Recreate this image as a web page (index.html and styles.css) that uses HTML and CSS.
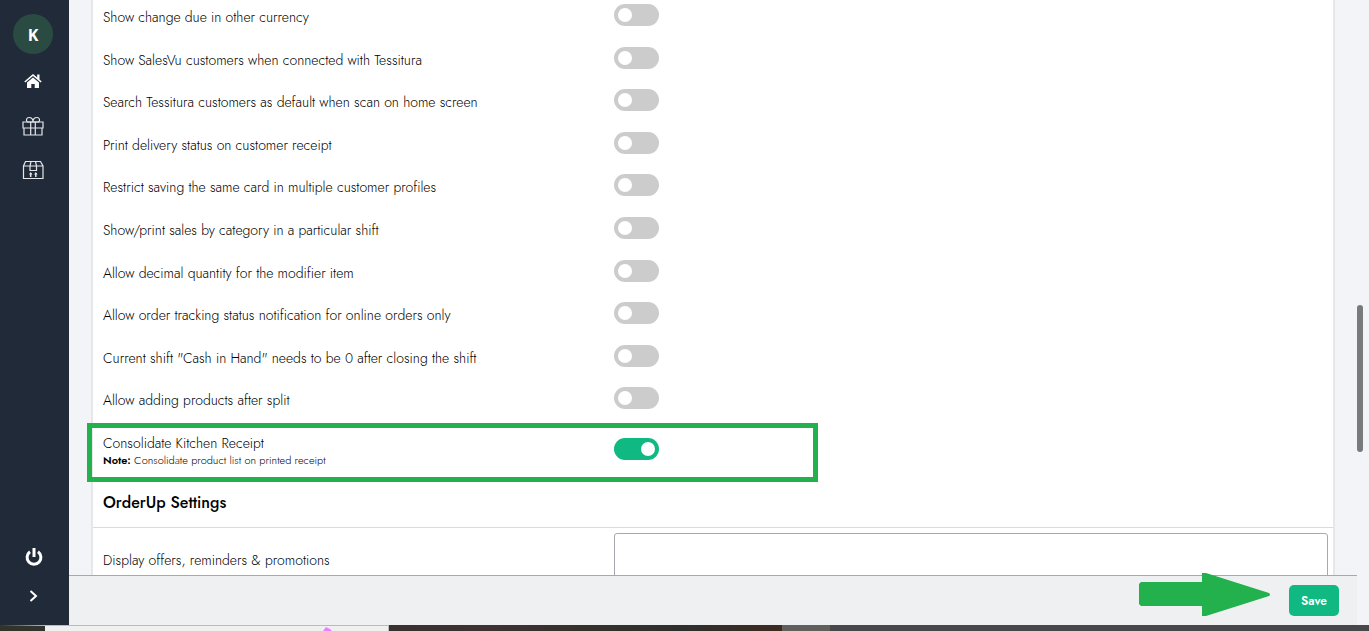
FILE: index.html
```html
<!DOCTYPE html>
<html lang="en">
<head>
    <meta charset="UTF-8">
    <meta name="viewport" content="width=device-width, initial-scale=1.0">
    <title>Settings</title>
    <link rel="stylesheet" href="styles.css">
</head>
<body>
    <div class="app">
        <nav class="sidebar">
            <a href="#" class="avatar">K</a>
            <a href="#" class="nav-link" aria-label="Home">
                <svg width="18" height="16" viewBox="0 0 18 16" fill="#fff">
                    <path d="M9 3.400 3 8.500V14h4.300v-4h3.400v4H15V8.500z"/>
                    <path d="M9 0 .3 7.400l1 1.200L9 2.100l7.700 6.500 1-1.200-2.200-1.900V.4h-2.300v3.100z"/>
                </svg>
            </a>
            <a href="#" class="nav-link" aria-label="Gifts">
                <svg width="22" height="20" viewBox="0 0 22 20" fill="none" stroke="#e4e6e9" stroke-width="1.200">
                    <path d="M1 6h20v6H1zM2 12h18v7H2zM8.700 6v13M13.300 6v13"/>
                    <path d="M11 6H5.500C3.500 4.500 4.500 1.500 7 1.500c2.500 0 4 2 4 4.500zM11 6h5.500c2-1.500 1-4.500-1.500-4.500-2.500 0-4 2-4 4.500z"/>
                </svg>
            </a>
            <a href="#" class="nav-link" aria-label="Products">
                <svg width="22" height="20" viewBox="0 0 22 20" fill="none" stroke="#e4e6e9" stroke-width="1.200">
                    <path d="M3.500 1.500h15L21 6v12.500H1.500V6zM1.500 6H21M9 1.500 8 6v4.500h6.500V6l-1-4.500"/>
                    <path d="M8.700 17v-4M13.800 17v-4" stroke-width="1.500"/>
                    <path d="M7 14.500 8.700 12l1.700 2.500zM12.100 14.500l1.700-2.500 1.700 2.500z" fill="#e4e6e9" stroke="none"/>
                </svg>
            </a>
            <a href="#" class="nav-link power" aria-label="Log out">
                <svg width="18" height="18" viewBox="0 0 18 18" fill="none" stroke="#fff" stroke-width="3">
                    <path d="M5 3.700a6.900 6.900 0 1 0 8 0M9 0v9"/>
                </svg>
            </a>
            <button class="expand" aria-label="Expand menu">
                <svg width="9" height="12" viewBox="0 0 9 12" fill="none" stroke="#fff" stroke-width="2">
                    <path d="M1.500 1 7 6l-5.500 5"/>
                </svg>
            </button>
        </nav>

        <div class="content">
            <main class="panel-area">
                <form class="panel" id="settings">
                    <div class="setting-list">
                        <div class="row">
                            <label for="s1">Show change due in other currency</label>
                            <input type="checkbox" class="toggle" id="s1">
                        </div>
                        <div class="row">
                            <label for="s2">Show SalesVu customers when connected with Tessitura</label>
                            <input type="checkbox" class="toggle" id="s2">
                        </div>
                        <div class="row">
                            <label for="s3">Search Tessitura customers as default when scan on home screen</label>
                            <input type="checkbox" class="toggle" id="s3">
                        </div>
                        <div class="row">
                            <label for="s4">Print delivery status on customer receipt</label>
                            <input type="checkbox" class="toggle" id="s4">
                        </div>
                        <div class="row">
                            <label for="s5">Restrict saving the same card in multiple customer profiles</label>
                            <input type="checkbox" class="toggle" id="s5">
                        </div>
                        <div class="row">
                            <label for="s6">Show/print sales by category in a particular shift</label>
                            <input type="checkbox" class="toggle" id="s6">
                        </div>
                        <div class="row">
                            <label for="s7">Allow decimal quantity for the modifier item</label>
                            <input type="checkbox" class="toggle" id="s7">
                        </div>
                        <div class="row">
                            <label for="s8">Allow order tracking status notification for online orders only</label>
                            <input type="checkbox" class="toggle" id="s8">
                        </div>
                        <div class="row">
                            <label for="s9">Current shift "Cash in Hand" needs to be 0 after closing the shift</label>
                            <input type="checkbox" class="toggle" id="s9">
                        </div>
                        <div class="row">
                            <label for="s10">Allow adding products after split</label>
                            <input type="checkbox" class="toggle" id="s10">
                        </div>
                    </div>

                    <div class="row noted">
                        <div>
                            <label for="s11">Consolidate Kitchen Receipt</label>
                            <p class="note"><b>Note:</b> Consolidate product list on printed receipt</p>
                        </div>
                        <input type="checkbox" class="toggle" id="s11" checked>
                        <div class="highlight"></div>
                    </div>

                    <h2>OrderUp Settings</h2>

                    <div class="row offers">
                        <label for="offers">Display offers, reminders &amp; promotions</label>
                        <textarea id="offers"></textarea>
                    </div>
                </form>
            </main>

            <footer class="action-bar">
                <svg class="arrow" width="131" height="43" viewBox="0 0 131 43" fill="#22b14c">
                    <path d="M2 9h61V0h4l63 20q2 2 0 3L67 43h-4V33H2l-2-2V11z"/>
                </svg>
                <button class="save" form="settings">Save</button>
            </footer>
        </div>

        <div class="scrollbar"><div class="thumb"></div></div>
    </div>

    <!-- Strip of desktop under the window -->
    <div class="desktop">
        <div class="taskbar">
            <svg width="10" height="4" viewBox="0 0 10 4" fill="#ea80fc"><path d="M0 4 3 0l4 2 2 2z"/></svg>
        </div>
        <div class="wallpaper"></div>
        <div class="wallpaper-light"></div>
    </div>
</body>
</html>
```

FILE: styles.css
```css
:root {
    --sidebar: #212a38;
    --page: #f3f4f7;
    --line: #e5e7eb;
    --grey: #a5a9ae;
    --green: #10b981;
    --marker: #22b14c;
}

* {
    box-sizing: border-box;
}

body {
    margin: 0;
    height: 100vh;
    display: flex;
    flex-direction: column;
    overflow: hidden;
    font-family: Jost, Lato, sans-serif;
    font-size: 14px;
    font-weight: 300;
    color: #000;
    background: var(--page);
}

.app {
    flex: 1;
    min-height: 0;
    display: flex;
}

.sidebar {
    width: 69px;
    padding: 14px 3px 16px 0;
    background: var(--sidebar);
    display: flex;
    flex-direction: column;
    align-items: center;
}

.avatar {
    width: 40px;
    height: 40px;
    margin-bottom: 6px;
    border-radius: 50%;
    background: #2a4b41;
    color: #fff;
    font: bold 16px/42px "Open Sans", sans-serif;
    text-align: center;
    text-decoration: none;
}

.nav-link {
    height: 44px;
    display: flex;
    align-items: center;
}

.power {
    margin-top: auto;
    padding-left: 2px;
}

.expand {
    height: 24px;
    margin-top: 6px;
    padding: 0;
    border: 0;
    background: none;
}

.content {
    flex: 1;
    min-width: 0;
    display: flex;
    flex-direction: column;
}

.panel-area {
    flex: 1;
    min-height: 0;
    padding: 0 22px;
    overflow: hidden;
}

.panel {
    padding: 0 5px 0 10px;
    border: solid var(--line);
    border-width: 0 2px;
    background: #fff;
}

.setting-list {
    min-height: 426px;
    display: grid;
    grid-auto-rows: 1fr;
}

.row {
    padding-top: 4px;
    display: grid;
    grid-template-columns: 5fr 7fr;
    column-gap: 1px;
    align-items: start;
    line-height: 26px;
}

.toggle {
    appearance: none;
    width: 45px;
    height: 22px;
    margin: 0;
    padding: 4px;
    border-radius: 11px;
    background: #ccc;
    display: flex;
}

.toggle::before {
    content: "";
    width: 14px;
    height: 14px;
    border-radius: 50%;
    background: #fff;
}

.toggle:checked {
    background: var(--green);
    justify-content: flex-end;
}

.noted {
    position: relative;
    padding-bottom: 21px;
}

.noted .toggle {
    margin-top: 8px;
}

.note {
    margin: 0;
    font-size: 11px;
    line-height: 8px;
}

.note b {
    font-weight: 600;
}

.highlight {
    position: absolute;
    top: -3px;
    bottom: 3px;
    left: -16px;
    width: 731px;
    border: 5px solid var(--marker);
    pointer-events: none;
}

h2 {
    margin: 0 -5px 0 -10px;
    padding: 4px 10px 10px;
    border-bottom: 1px solid #d9dbde;
    font-size: 16px;
    font-weight: 500;
    line-height: 28px;
}

.offers {
    padding-top: 5px;
}

.offers label {
    padding-top: 14px;
}

textarea {
    width: 100%;
    height: 90px;
    border: 1px solid var(--grey);
    border-radius: 3px;
    background: #fff;
    resize: none;
}

.action-bar {
    position: relative;
    height: 50px;
    padding: 0 18px;
    border-top: 1px solid var(--grey);
    background: #eff0f2;
    display: flex;
    align-items: center;
    justify-content: flex-end;
}

.arrow {
    position: absolute;
    top: -3px;
    right: 87px;
}

.save {
    width: 50px;
    height: 31px;
    padding: 0;
    border: 0;
    border-radius: 5px;
    background: var(--green);
    color: #fff;
    font: 600 12px Jost, Lato, sans-serif;
}

.scrollbar {
    width: 12px;
    padding-top: 305px;
}

.thumb {
    width: 6px;
    height: 147px;
    border-radius: 3px;
    background: #787b7b;
}

.desktop {
    height: 6px;
    display: flex;
    background: #48484a;
}

.taskbar {
    width: 389px;
    padding: 1px 0 0 278px;
    border: solid #bbb;
    border-width: 1px 1px 0 0;
    border-left: 45px solid #33332b;
    background: #f0f0f0;
    display: flex;
}

.wallpaper {
    width: 393px;
    background: linear-gradient(to right, #3a302f, #403033, #35302a, #302e2d, #3e2b20);
}

.wallpaper-light {
    width: 48px;
    background: #625e5b;
}
```
